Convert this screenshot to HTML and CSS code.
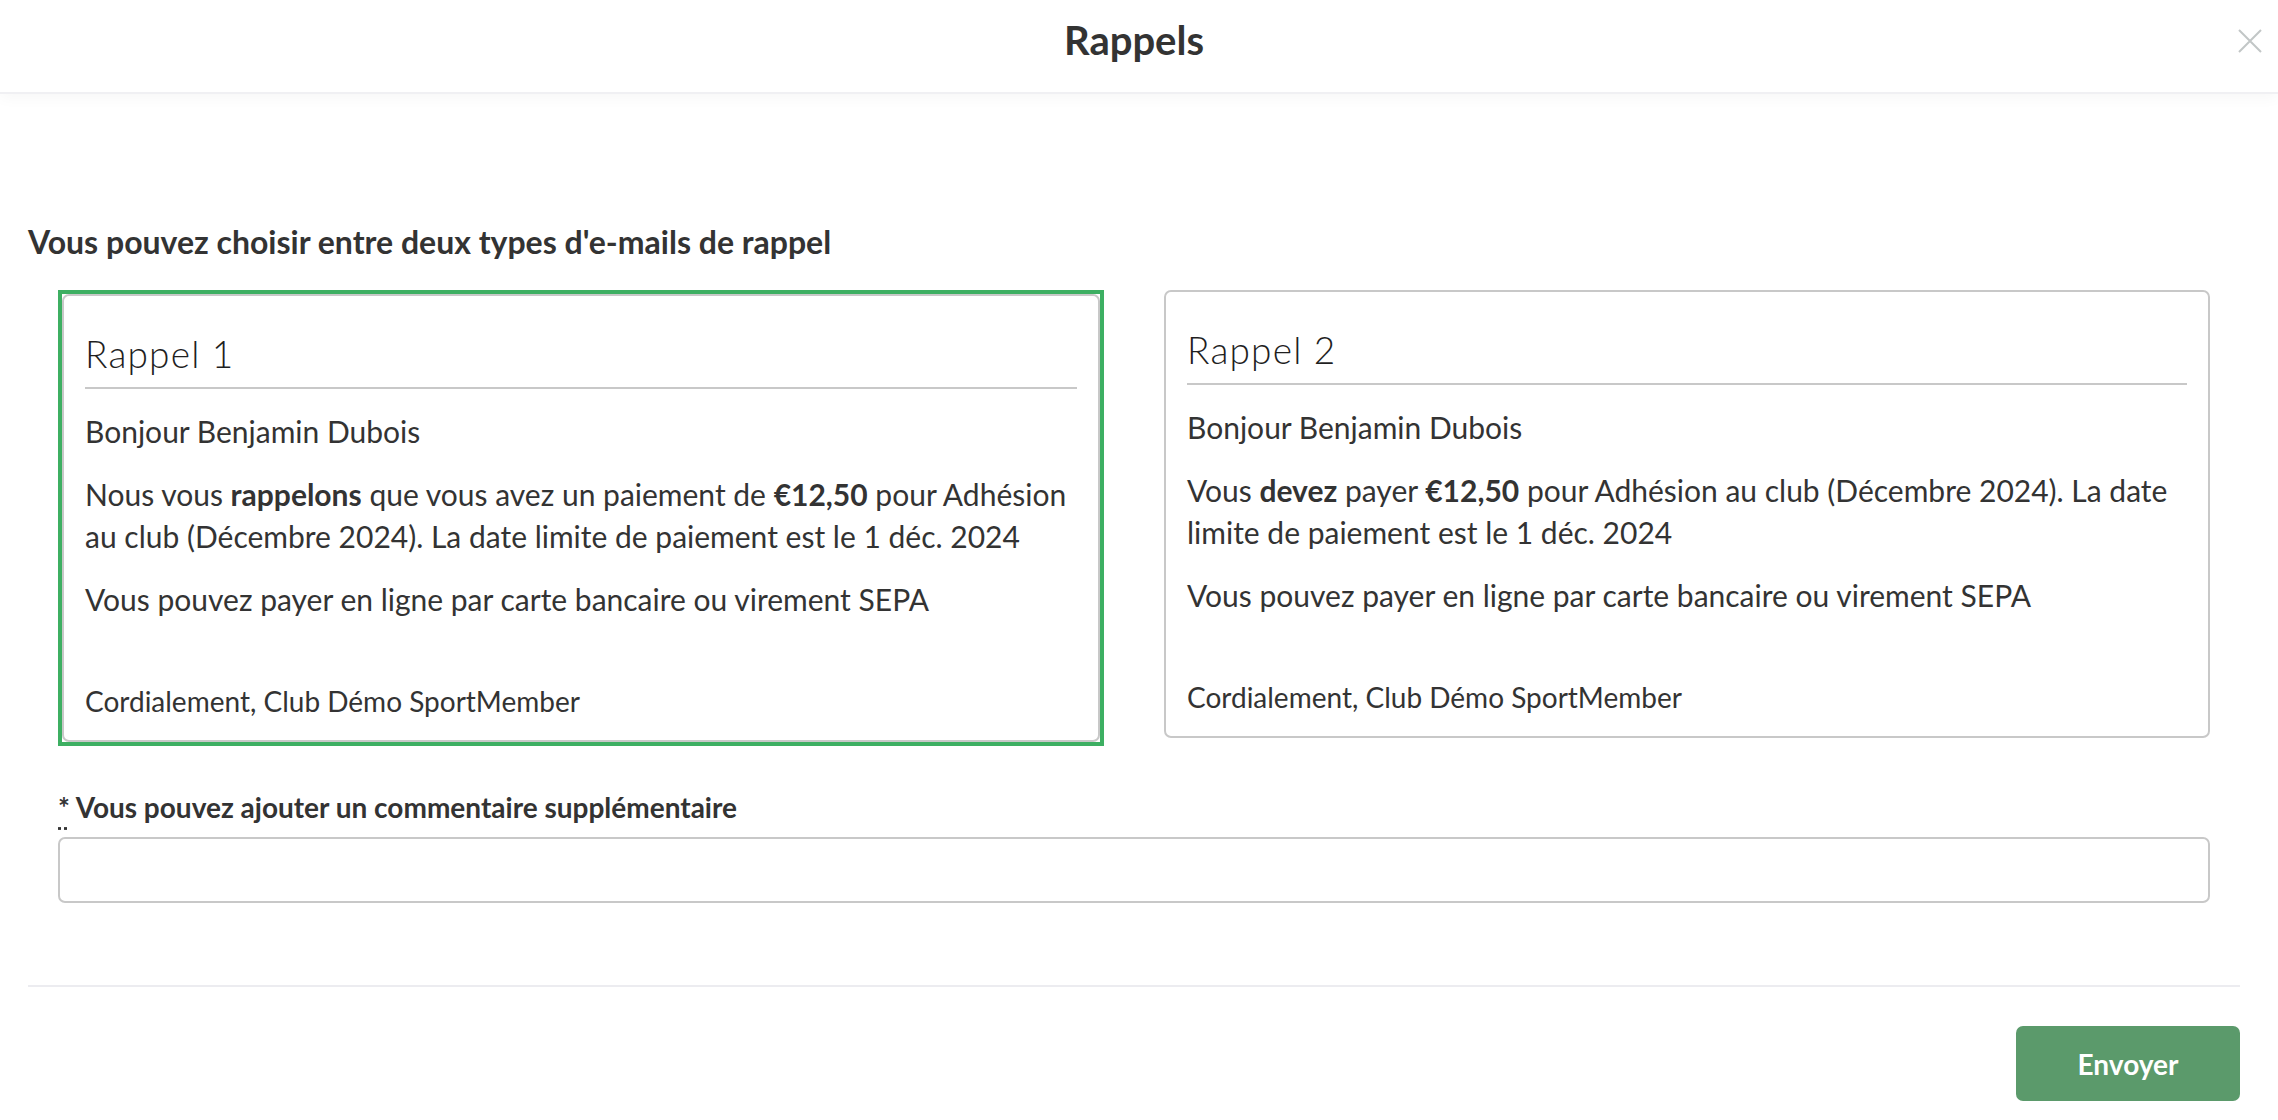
FILE: index.html
```html
<!DOCTYPE html>
<html lang="fr">
<head>
<meta charset="utf-8">
<title>Rappels</title>
<link rel="stylesheet" href="styles.css">
</head>
<body>
<div class="modal">
  <header class="modal-header">
    <h1 class="modal-title">Rappels</h1>
    <button class="close" type="button" aria-label="Fermer">
      <svg width="24" height="24" viewBox="0 0 24 24"><path d="M1 1 L23 23 M23 1 L1 23" stroke="#c2c6c6" stroke-width="2" fill="none"/></svg>
    </button>
  </header>
  <div class="modal-body">
    <h2 class="intro">Vous pouvez choisir entre deux types d'e-mails de rappel</h2>
    <div class="cards">
      <div class="card-wrap selected">
        <div class="card">
          <h3 class="card-title">Rappel 1</h3>
          <p>Bonjour Benjamin Dubois</p>
          <p>Nous vous <strong>rappelons</strong> que vous avez un paiement de <strong>€12,50</strong> pour Adhésion au club (Décembre 2024). La date limite de paiement est le 1 déc. 2024</p>
          <p>Vous pouvez payer en ligne par carte bancaire ou virement SEPA</p>
          <p class="sign">Cordialement, Club Démo SportMember</p>
        </div>
      </div>
      <div class="card-wrap">
        <div class="card">
          <h3 class="card-title">Rappel 2</h3>
          <p>Bonjour Benjamin Dubois</p>
          <p>Vous <strong>devez</strong> payer <strong>€12,50</strong> pour Adhésion au club (Décembre 2024). La date limite de paiement est le 1 déc. 2024</p>
          <p>Vous pouvez payer en ligne par carte bancaire ou virement SEPA</p>
          <p class="sign">Cordialement, Club Démo SportMember</p>
        </div>
      </div>
    </div>
    <div class="field">
      <label class="field-label" for="comment"><abbr class="req" title="obligatoire">*</abbr> Vous pouvez ajouter un commentaire supplémentaire</label>
      <input class="field-input" id="comment" type="text">
    </div>
  </div>
  <footer class="modal-footer">
    <button class="btn-send" type="button">Envoyer</button>
  </footer>
</div>
</body>
</html>
```
FILE: styles.css
```css
* { box-sizing: border-box; }
html, body { margin: 0; padding: 0; background: #fff; }
body {
  font-family: "Lato", "Liberation Sans", sans-serif;
  color: #333;
  width: 2278px;
  height: 1120px;
  overflow: hidden;
}
.modal { width: 2268px; }
.modal-header {
  position: relative;
  width: 2278px;
  height: 94px;
  display: flex;
  align-items: center;
  justify-content: center;
  padding-right: 10px;
  border-bottom: 2px solid #f0f0f3;
  box-shadow: 0 4px 14px rgba(0, 0, 0, 0.035);
}
.modal-title {
  margin: 0;
  font-size: 40px;
  font-weight: 700;
  line-height: 48px;
  padding-bottom: 12px;
  color: #333;
}
.close {
  position: absolute;
  right: 16px;
  top: 29px;
  width: 24px;
  height: 24px;
  padding: 0;
  border: 0;
  background: none;
  cursor: pointer;
}
.close svg { display: block; }
.modal-body {
  margin: 0 28px;
  padding-top: 130px;
  padding-bottom: 82px;
  border-bottom: 2px solid #ececf0;
}
.intro {
  margin: 0;
  font-size: 32px;
  line-height: 36px;
  font-weight: 700;
}
.cards {
  display: grid;
  grid-template-columns: 1fr 1fr;
  align-items: start;
  column-gap: 60px;
  padding: 0 30px;
  margin-top: 30px;
}
.card-wrap { min-width: 0; }
.card-wrap.selected { border: 4px solid #3daf62; }
.card {
  border: 2px solid #c8c8c8;
  border-radius: 7px;
  padding: 37px 21px 21px;
}
.card-title {
  margin: 0;
  font-size: 37px;
  line-height: 42px;
  font-weight: 300;
  letter-spacing: 1.2px;
  color: #1f1f1f;
  padding-bottom: 12px;
  border-bottom: 2px solid #c8c8c8;
}
.card p {
  margin: 21px 0 0;
  font-size: 30px;
  line-height: 42px;
}
.card strong { font-weight: 700; }
.card p.sign {
  margin-top: 63px;
  font-size: 28px;
  line-height: 36px;
}
.field {
  padding: 0 30px;
  margin-top: 44px;
  display: flex;
  flex-direction: column;
  gap: 13px;
}
.field-label {
  font-size: 28px;
  line-height: 34px;
  font-weight: 700;
}
.req {
  text-decoration: underline dotted;
  text-underline-offset: 9px;
  cursor: help;
}
.field-input {
  height: 66px;
  border: 2px solid #c8c8c8;
  border-radius: 7px;
  font-family: inherit;
  font-size: 28px;
  padding: 0 16px;
  outline: none;
}
.modal-footer {
  display: flex;
  justify-content: flex-end;
  padding: 39px 28px 0 28px;
  width: 2268px;
}
.btn-send {
  width: 224px;
  height: 75px;
  border: 0;
  border-radius: 7px;
  background: #5b9a6b;
  color: #fff;
  font-family: inherit;
  font-size: 28px;
  font-weight: 700;
}
```
